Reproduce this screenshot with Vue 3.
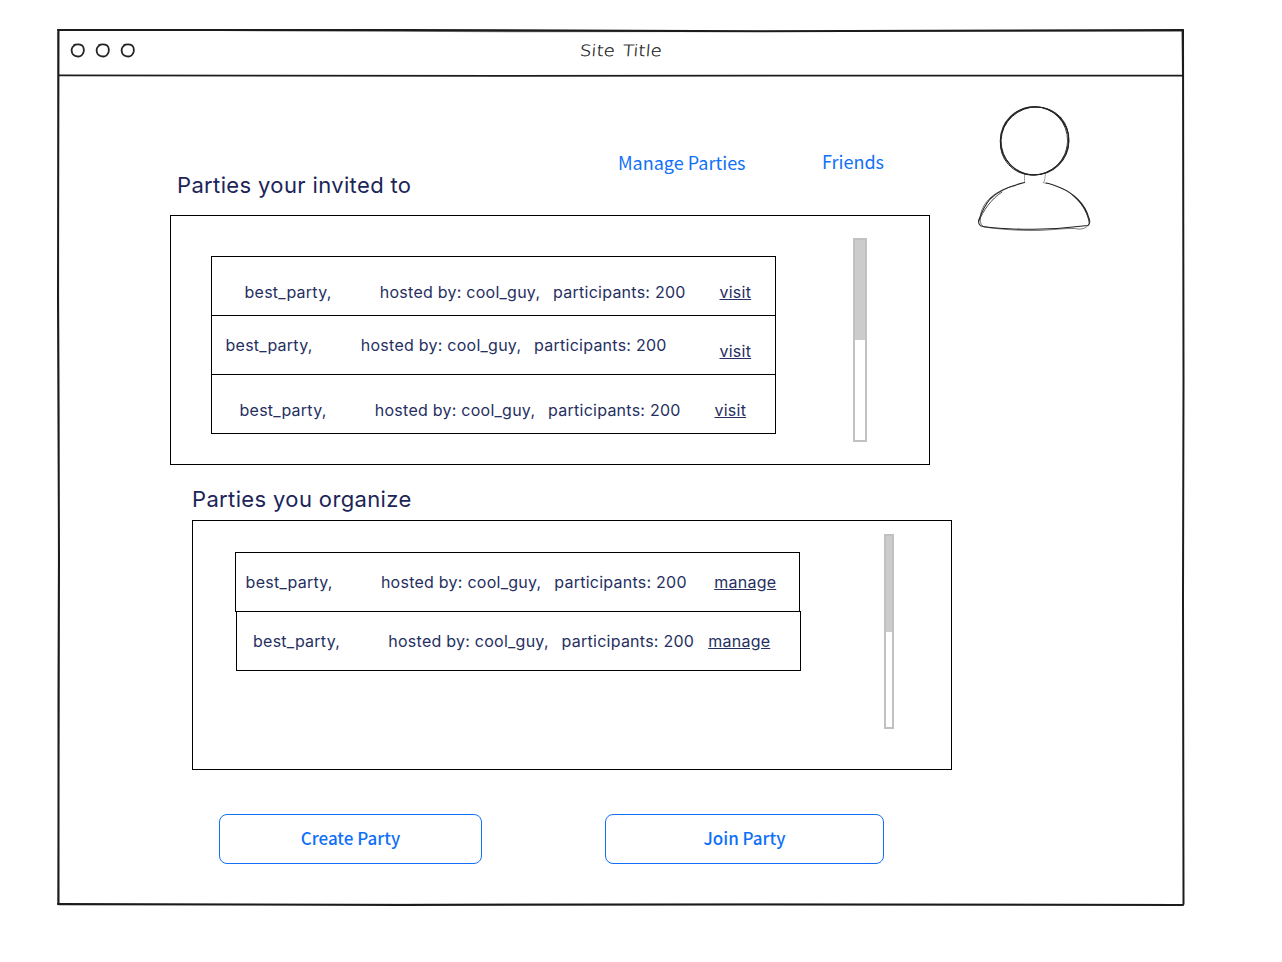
<script setup>
const invited = [
  { pad: 32.5, cls: 'low', action: 'visit', linkX: 507.5, linkCls: 'low' },
  { pad: 13.5, cls: 'mid', action: 'visit', linkX: 507.5, linkCls: 'low' },
  { pad: 27.5, cls: 'low', action: 'visit', linkX: 502.5, linkCls: 'low' },
]

const organized = [
  { pad: 9.6, cls: 'mid', action: 'manage', linkX: 478.2, linkCls: 'mid' },
  { pad: 16, cls: 'mid', action: 'manage', linkX: 471.2, linkCls: 'mid' },
]
</script>

<template>
  <div class="page">
    <div class="window">
      <svg class="frame" width="1133" height="883" viewBox="54 26 1133 883" fill="none" stroke="#1c1c1c" stroke-linecap="round">
        <path d="M58 30 L400 30 L760 31.3 L1183 30" stroke-width="2.1" />
        <path d="M58 30 L220 30.4 L520 31.6 L1183 31" stroke-width="1.4" opacity=".6" />
        <path d="M58.5 30 L58 300 L59 560 L58.3 904" stroke-width="2" />
        <path d="M57.6 32 L59 420 L58 700 L59 904" stroke-width="1.3" opacity=".5" />
        <path d="M1183 30 L1183.5 380 L1183 600 L1183.5 904" stroke-width="2" />
        <path d="M1182.6 31 L1183 76" stroke-width="2" />
        <path d="M59 75.4 L500 75.8 L1183 75.6" stroke-width="1.8" />
        <path d="M58 904 L400 905 L740 904.5 L1183 905" stroke-width="2" />
        <path d="M59 905 L550 904 L1183 904.5" stroke-width="1.2" opacity=".5" />
      </svg>

      <header class="titlebar">
        <svg class="dots" width="68" height="18" viewBox="69 41 68 18" fill="none" stroke="#222" stroke-width="1.8">
          <path v-for="x in [0, 25, 50]" :key="x" :transform="`translate(${x} 0)`"
            d="M73.5 45.4 C76 44 80 44 82 45.4 C83.8 47 84 50 83.6 52 C82.5 55.5 79.5 56.8 77 56.4 C74 56 71.8 53.5 71.6 50.5 C71.6 48 73 46 75.5 44.8" />
        </svg>
        <span class="site-title">Site Title</span>
      </header>

      <div class="content">
        <main>
          <div class="top">
            <h1>Parties your invited to</h1>
            <nav><a class="manage">Manage Parties</a><a>Friends</a></nav>
          </div>

          <section class="panel first">
            <div class="rows">
              <div v-for="(r, i) in invited" :key="i" class="row">
                <p :class="r.cls" :style="{ paddingLeft: r.pad + 'px', width: r.linkX + 'px' }">
                  <span class="name">best_party,</span><span class="host">hosted by: cool_guy,</span><span>participants: 200</span>
                </p>
                <a :class="r.linkCls">{{ r.action }}</a>
              </div>
            </div>
            <div class="scroll"><i></i></div>
          </section>

          <h2>Parties you organize</h2>
          <section class="panel second">
            <div class="rows">
              <div v-for="(r, i) in organized" :key="i" class="row">
                <p :class="r.cls" :style="{ paddingLeft: r.pad + 'px', width: r.linkX + 'px' }">
                  <span class="name">best_party,</span><span class="host">hosted by: cool_guy,</span><span>participants: 200</span>
                </p>
                <a :class="r.linkCls">{{ r.action }}</a>
              </div>
            </div>
            <div class="scroll"><i></i></div>
          </section>

          <div class="actions">
            <button class="create">Create Party</button>
            <button class="join">Join Party</button>
          </div>
        </main>

        <svg class="avatar" width="120" height="132" viewBox="974 102 120 132" fill="none" stroke="#222" stroke-linecap="round">
          <ellipse cx="1034.6" cy="140.8" rx="34.2" ry="34" stroke-width="1.2" />
          <ellipse cx="1034.6" cy="141" rx="35.2" ry="33.2" transform="rotate(-42 1034.6 141)" stroke-width=".9" />
          <ellipse cx="1034.4" cy="140.8" rx="33.2" ry="34.2" transform="rotate(12 1034.4 140.8)" stroke-width=".8" />
          <path d="M1024.5 174 V182.5 M1045.5 174 L1044.5 181 L1043 182.5 L1047 183.5" stroke-width=".6" opacity=".7" />
          <path d="M1024.5 182.5 C1010 186 999 190 990 199 C985 205 981 214 978.8 220 C978 223 979.5 226 983 226.5 C1000 229 1020 229.4 1034 229.3 C1052 229 1072 227.5 1088 225.5 C1090.5 224 1090 220 1088.5 217 C1085 204 1073 193 1061 188 C1055 185.5 1050 183.5 1046 183" stroke-width="1.1" />
          <path d="M1016 185.5 C998 189 984 200 981 213 C980 219 979.5 225 984 227 C1001 229.5 1024 231 1040 230.4 C1057 229.5 1072 227.5 1078 229 C1084 229.5 1088 227 1089 223 C1088 212 1081 202 1072 195" stroke-width=".6" />
          <path d="M1002 192 C991 199 983 211 979 221 M1075 197 C1083 204 1088 215 1089.5 222" stroke-width=".8" />
        </svg>
      </div>
    </div>
  </div>
</template>

<style>
body { background: #fff; }
</style>

<style scoped>
* { box-sizing: border-box; }
.page { width: 1282px; height: 962px; padding: 29px 0 0 57px; overflow: hidden; background: #fff; font-family: Inter, sans-serif; color: #1b2559; }
.window { position: relative; width: 1127px; height: 877px; }
.frame { position: absolute; left: -3px; top: -3px; pointer-events: none; }
.titlebar { height: 47px; display: flex; align-items: flex-start; padding: 12px 0 0 12px; }
.dots { display: block; }
.site-title { margin-left: 443px; font: 200 15.5px/20px "DejaVu Sans", sans-serif; color: #111; white-space: pre; word-spacing: 2px; -webkit-text-stroke: .25px #111; transform: scaleX(1.17) skewX(-4deg); transform-origin: left center; }
.content { display: flex; align-items: flex-start; }
main { width: 895px; padding-left: 113px; }
.top { height: 139px; display: flex; align-items: flex-start; }
h1, h2 { margin: 0; font-size: 22px; line-height: 30px; font-weight: 400; letter-spacing: .36px; white-space: nowrap; }
h1 { width: 448px; padding: 94px 0 0 7px; }
h2 { margin: 19px 0 6px 22px; }
nav { display: flex; align-items: flex-start; padding-top: 70px; font: 400 18px/30px "Noto Sans CJK SC", sans-serif; color: #1170f8; white-space: nowrap; }
nav .manage { width: 204px; padding-top: 1px; }
.panel { width: 760px; height: 250px; border: 1px solid #000; display: flex; align-items: flex-start; }
.first { padding: 40px 0 0 40px; }
.second { margin-left: 22px; padding: 31px 0 0 42px; }
.row { width: 565px; height: 60px; border: 1px solid #000; display: flex; font-size: 16px; line-height: 20px; letter-spacing: .25px; color: #262f61; white-space: nowrap; }
.row + .row { margin-top: -1px; }
.second .row + .row { margin-left: 1px; }
.row p { margin: 0; display: flex; flex: none; }
.row .mid { padding-top: 19px; }
.row .low { padding-top: 25px; }
.row a { text-decoration: underline; }
.name { width: 135.3px; flex: none; }
.host { width: 173.3px; flex: none; }
.scroll { border: 2px solid #c1c1c1; }
.scroll i { display: block; background: #ccc; }
.first .scroll { width: 14px; height: 204px; margin: -18px 0 0 77px; }
.first .scroll i { height: 100px; }
.second .scroll { width: 10px; height: 195px; margin: -18px 0 0 83px; }
.second .scroll i { height: 96px; }
.actions { display: flex; padding: 44px 0 0 49px; }
button { height: 50px; padding: 0 0 2px; border: 1px solid #1170f8; border-radius: 8px; background: #fff; color: #1170f8; font: 500 17px/46px "Noto Sans CJK SC", sans-serif; }
.create { width: 263px; }
.join { width: 279px; margin-left: 123px; }
.avatar { display: block; margin: 26px 0 0 22px; }
</style>
